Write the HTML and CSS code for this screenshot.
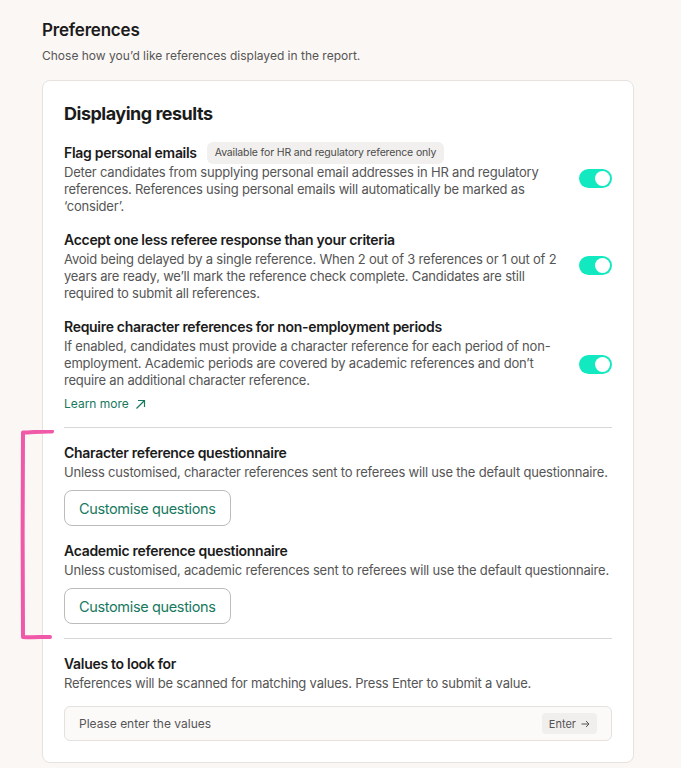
FILE: index.html
```html
<html>
<head>
	<title>Preferences</title>
	<link rel="stylesheet" href="styles.css">
	<meta name="viewport" content="width=device-width, initial-scale=1.0">
</head>
<body>

	<div class="page">
		<h1 class="page-title">Preferences</h1>
		<p class="page-sub">Chose how you’d like references displayed in the report.</p>

		<div class="card">
			<h2 class="card-title">Displaying results</h2>

			<div class="setting">
				<div class="setting-text">
					<div class="setting-head">
						<h3>Flag personal emails</h3>
						<span class="badge">Available for HR and regulatory reference only</span>
					</div>
					<p>Deter candidates from supplying personal email addresses in HR and regulatory references. References using personal emails will automatically be marked as ‘consider’.</p>
				</div>
				<span class="toggle"></span>
			</div>

			<div class="setting">
				<div class="setting-text">
					<div class="setting-head">
						<h3>Accept one less referee response than your criteria</h3>
					</div>
					<p>Avoid being delayed by a single reference. When 2 out of 3 references or 1 out of 2 years are ready, we’ll mark the reference check complete. Candidates are still required to submit all references.</p>
				</div>
				<span class="toggle"></span>
			</div>

			<div class="setting">
				<div class="setting-text">
					<div class="setting-head">
						<h3>Require character references for non-employment periods</h3>
					</div>
					<p>If enabled, candidates must provide a character reference for each period of non-employment. Academic periods are covered by academic references and don’t require an additional character reference.</p>
					<a class="learn-more" href="#">Learn more
						<svg width="11" height="11" viewBox="0 0 11 11"><path d="M1.5 9.5 L9.5 1.5 M3 1.5 H9.5 V8" fill="none" stroke="currentColor" stroke-width="1.2"/></svg>
					</a>
				</div>
				<span class="toggle"></span>
			</div>

			<hr class="divider">

			<div class="block">
				<h3>Character reference questionnaire</h3>
				<p>Unless customised, character references sent to referees will use the default questionnaire.</p>
				<button class="btn">Customise questions</button>
			</div>

			<div class="block">
				<h3>Academic reference questionnaire</h3>
				<p>Unless customised, academic references sent to referees will use the default questionnaire.</p>
				<button class="btn">Customise questions</button>
			</div>

			<hr class="divider">

			<div class="block">
				<h3>Values to look for</h3>
				<p>References will be scanned for matching values. Press Enter to submit a value.</p>
				<div class="values-input">
					<span class="placeholder">Please enter the values</span>
					<span class="enter-key">Enter
						<svg width="9" height="8" viewBox="0 0 9 8"><path d="M0.5 4 H8 M5 1 L8 4 L5 7" fill="none" stroke="currentColor" stroke-width="1"/></svg>
					</span>
				</div>
			</div>
		</div>
	</div>

	<svg class="bracket" width="40" height="220" viewBox="0 0 40 220">
		<path d="M33 1.5 C24 1 12 2.5 4 2.5 C3.5 60 3.5 150 4 207 C11 207.5 22 207 31 207" fill="none" stroke="#f058a8" stroke-width="4" stroke-linecap="round" stroke-linejoin="round"/>
	</svg>

</body>
</html>
```

FILE: styles.css
```css
* {
	margin: 0;
	padding: 0;
	box-sizing: border-box;
}

body {
	background-color: #fbf7f4;
	font-family: Inter, "Noto Sans", sans-serif;
	color: #1b1b1b;
	position: relative;
}

.page {
	width: 592px;
	margin-left: 42px;
	padding-top: 19px;
}

.page-title {
	font-size: 17px;
	font-weight: 600;
	line-height: 22px;
	letter-spacing: -0.2px;
}

.page-sub {
	font-size: 12px;
	line-height: 18px;
	color: #555;
	margin-top: 6px;
}

.card {
	margin-top: 15px;
	background-color: #fff;
	border: 1px solid #e6e2df;
	border-radius: 8px;
	padding: 20px 21px 21px 21px;
}

.card-title {
	font-size: 18px;
	font-weight: 700;
	line-height: 26px;
	letter-spacing: -0.5px;
	margin-bottom: 15px;
}

h3 {
	font-size: 14px;
	font-weight: 600;
	line-height: 22px;
	letter-spacing: -0.3px;
}

.setting {
	display: flex;
	align-items: center;
	justify-content: space-between;
	margin-bottom: 14px;
}

.setting-text {
	width: 505px;
}

.setting-head {
	display: flex;
	align-items: center;
	gap: 10px;
}

.setting p, .block p {
	font-size: 13px;
	line-height: 17px;
	color: #555;
	letter-spacing: -0.2px;
}

.badge {
	background-color: #f2f0ee;
	border-radius: 6px;
	font-size: 10.5px;
	line-height: 22px;
	letter-spacing: -0.15px;
	padding: 0 8px;
	color: #4a4a4a;
}

.toggle {
	width: 33px;
	height: 19px;
	border-radius: 10px;
	background-color: #13e9c1;
	position: relative;
	flex-shrink: 0;
}

.toggle:after {
	content: "";
	position: absolute;
	right: 2px;
	top: 2px;
	width: 15px;
	height: 15px;
	border-radius: 50%;
	background-color: #fff;
}

.learn-more {
	display: inline-flex;
	align-items: center;
	gap: 6px;
	margin-top: 6px;
	font-size: 12px;
	line-height: 18px;
	color: #17795e;
	text-decoration: none;
}

.divider {
	border: none;
	height: 1px;
	background-color: #d9d8d7;
	margin: 0 0 14px 0;
}

.block {
	margin-bottom: 14px;
}

.block + .block {
	margin-top: 1px;
}

.block:last-child {
	margin-bottom: 0;
}

.btn {
	margin-top: 9px;
	height: 36px;
	padding: 0 14px;
	background-color: #fff;
	border: 1px solid #bdbcbb;
	border-radius: 8px;
	font-family: Inter, "Noto Sans", sans-serif;
	font-size: 14.5px;
	letter-spacing: -0.35px;
	color: #17795e;
}

.values-input {
	margin-top: 14px;
	height: 35px;
	display: flex;
	align-items: center;
	justify-content: space-between;
	padding: 0 14px 0 14px;
	background-color: #fcfaf9;
	border: 1px solid #e4e1de;
	border-radius: 6px;
}

.placeholder {
	font-size: 12px;
	color: #555;
}

.enter-key {
	display: inline-flex;
	align-items: center;
	gap: 5px;
	height: 21px;
	padding: 0 7px;
	background-color: #f1efed;
	border-radius: 4px;
	font-size: 11px;
	color: #555;
}

.bracket {
	position: absolute;
	left: 19px;
	top: 430px;
}
```
